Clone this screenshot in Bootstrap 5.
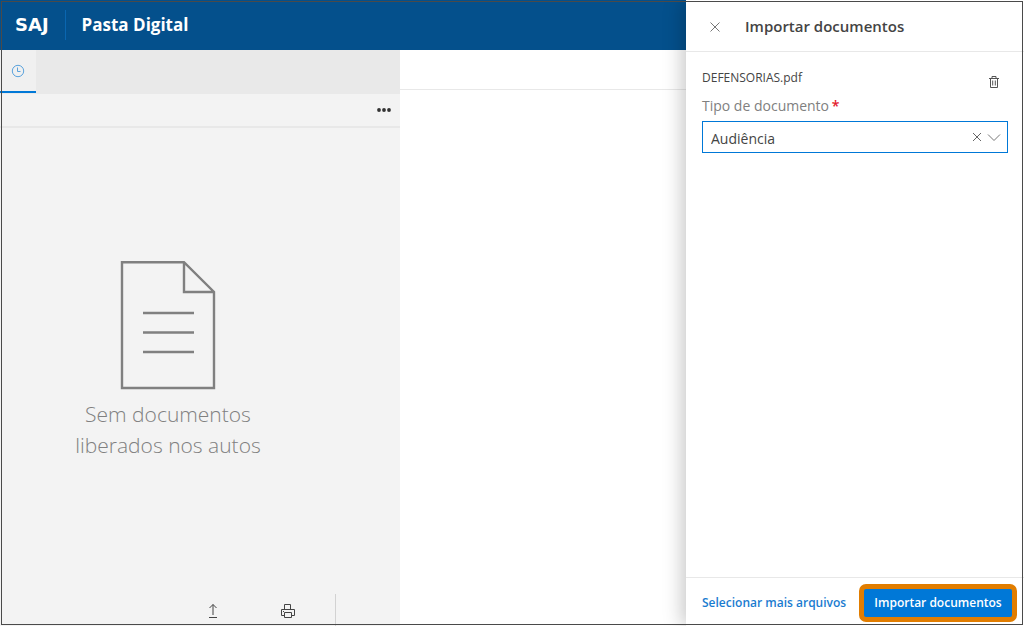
<!DOCTYPE html>
<html lang="pt-BR">
<head>
<meta charset="utf-8">
<meta name="viewport" content="width=device-width, initial-scale=1">
<title>Pasta Digital</title>
<link rel="stylesheet" href="https://cdn.jsdelivr.net/npm/bootstrap@5.3.0/dist/css/bootstrap.min.css">
<style>
  body { font-family: "Open Sans", "Noto Sans", sans-serif; font-size: 14px; color: #444; }
  .app-frame::after { content: ""; position: absolute; inset: 1px; border: 1px solid #4a4a4a; pointer-events: none; z-index: 5; }
  .app-bar { height: 50px; background: #04508c; }
  .brand-logo { font: 700 18px/24px "DejaVu Sans", sans-serif; padding: 0 16px 0 15px; }
  .brand-title { font: 700 17px/24px "Open Sans", sans-serif; padding: 0 16px; }
  .brand-rule { width: 1px; height: 30px; background: #0a66b0; }
  .docs-pane { width: 400px; background: #f3f3f3; }
  .tab-strip { height: 44px; background: #e9e9e9; }
  .tab-recent { width: 36px; height: 43px; background: #f0f0f0; border-bottom: 2px solid #0078d7; }
  .pane-tools { height: 34px; border-bottom: 2px solid #e8e8e8; padding-right: 9px; }
  .empty-state { width: 336px; font-size: 21px; line-height: 31px; font-weight: 300; color: #808080; }
  .pane-actions { width: 336px; height: 32px; border-right: 1px solid #d2d2d2; padding: 2px 39px 0 0; gap: 59px; }
  .viewer-bar { height: 40px; border-bottom: 1px solid #e8e8e8; }
  .import-pane { width: 338px; box-shadow: -4px 0 18px rgba(0,0,0,.22); z-index: 2; }
  .import-head { height: 52px; border-bottom: 1px solid #e8e8e8; padding-left: 22px; gap: 23px; }
  .import-head h2 { font: 600 15px/24px "Open Sans", sans-serif; }
  .file-name { font-size: 12px; line-height: 20px; }
  .field-label { color: #808080; line-height: 20px; padding-bottom: 1px; }
  .req { color: #e3192c; font-weight: 600; margin-left: -1px; }
  .type-select { height: 32px; border: 1px solid #0078d7; border-radius: 0; background: #fff; padding: 2px 56px 0 8px; font-size: 14px; color: #444; appearance: none; }
  .select-icons { inset: 0 7px 0 auto; gap: 3px; pointer-events: none; }
  .select-icons button { pointer-events: auto; }
  .import-foot { height: 49px; border-top: 1px solid #e8e8e8; padding: 6px 7px 4px 16px; }
  .import-foot a, .import-btn { font: 600 12px/18px "Open Sans", sans-serif; }
  .import-foot a { color: #1a7cd0; }
  .import-btn { width: 158px; height: 38px; border: 5px solid #e17d00; border-radius: 7px; background: #0078d7; color: #fff; white-space: nowrap; }
  svg { display: block; fill: none; }
</style>
</head>
<body>
<div class="app-frame position-relative d-flex vh-100 overflow-hidden">
  <div class="d-flex flex-column flex-grow-1">
    <header class="app-bar d-flex align-items-center text-white">
      <span class="brand-logo">SAJ</span>
      <span class="brand-rule"></span>
      <h1 class="brand-title m-0">Pasta Digital</h1>
    </header>
    <div class="d-flex flex-grow-1">
      <main class="docs-pane d-flex flex-column flex-shrink-0">
        <nav class="tab-strip">
          <button class="tab-recent btn rounded-0 border-top-0 border-start-0 border-end-0 p-0 d-flex align-items-center justify-content-center" aria-label="Recentes">
            <svg width="14" height="14" viewBox="0 0 14 14"><g stroke="#5ba3dd"><circle cx="7" cy="7" r="5.7"/><path d="M6.500 3.500v4h3"/></g></svg>
          </button>
        </nav>
        <div class="pane-tools d-flex align-items-center justify-content-end">
          <button class="btn border-0 p-0" aria-label="Mais opções">
            <svg width="14" height="6" viewBox="0 0 14 6"><g fill="#333"><circle cx="2" cy="3" r="1.9"/><circle cx="7" cy="3" r="1.9"/><circle cx="12" cy="3" r="1.9"/></g></svg>
          </button>
        </div>
        <section class="empty-state flex-grow-1 d-flex flex-column align-items-center justify-content-center text-center">
          <svg class="mb-2" width="96" height="130" viewBox="0 1 96 130" stroke="#808080" stroke-width="2.4"><path d="M2 2.200H64L94 32V128H2ZM64 2V32H94M23 53H74M23 72.500H74M23 92H74"/></svg>
          <p class="m-0">Sem documentos<br>liberados nos autos</p>
        </section>
        <div class="pane-actions d-flex align-items-center justify-content-end">
          <button class="btn border-0 p-0" aria-label="Enviar"><svg width="16" height="16" viewBox="0 0 16 16" stroke="#444"><path d="M8 12V1.500M4.500 5 8 1.500 11.500 5M4 14.500h8"/></svg></button>
          <button class="btn border-0 p-0" aria-label="Imprimir"><svg width="16" height="16" viewBox="0 0 16 16" stroke="#444"><path d="M4.500 6.500v-5h6v5M4.500 12.500h-3v-6h13v6h-3M4.500 9.500h7v5h-7zM3 8.500h1"/></svg></button>
        </div>
      </main>
      <section class="flex-grow-1 bg-white"><div class="viewer-bar"></div></section>
    </div>
  </div>
  <aside class="import-pane d-flex flex-column flex-shrink-0 bg-white">
    <header class="import-head d-flex align-items-center">
      <button class="btn border-0 p-0" aria-label="Fechar"><svg width="14" height="14" viewBox="0 0 14 14" stroke="#777"><path d="M2.500 3.500l9 9M11.500 3.500l-9 9"/></svg></button>
      <h2 class="m-0">Importar documentos</h2>
    </header>
    <form class="flex-grow-1 px-3 pt-3">
      <div class="d-flex justify-content-between">
        <span class="file-name">DEFENSORIAS.pdf</span>
        <button type="button" class="btn border-0 p-0 pt-2 pe-2" aria-label="Excluir"><svg width="12" height="12" viewBox="0 0 12 12" stroke="#555"><path d="M1 2.500h10M4 2.500v-2h4v2M2.500 2.500v9h7v-9M4.700 4.500v5M7.300 4.500v5"/></svg></button>
      </div>
      <label class="field-label d-block mt-2 mb-1" for="tipo">Tipo de documento <span class="req">*</span></label>
      <div class="position-relative">
        <select id="tipo" class="type-select w-100"><option>Audiência</option></select>
        <div class="select-icons position-absolute d-flex align-items-center">
          <button type="button" class="btn border-0 p-0" aria-label="Limpar"><svg width="14" height="14" viewBox="0 0 14 14" stroke="#666"><path d="M3 3l8 8M11 3l-8 8"/></svg></button>
          <svg width="14" height="14" viewBox="0 0 14 14" stroke="#777"><path d="M1 4.500l6 6 6-6"/></svg>
        </div>
      </div>
    </form>
    <footer class="import-foot d-flex align-items-center justify-content-between">
      <a href="#" class="text-decoration-none">Selecionar mais arquivos</a>
      <button class="import-btn p-0">Importar documentos</button>
    </footer>
  </aside>
</div>
<script src="https://cdn.jsdelivr.net/npm/bootstrap@5.3.0/dist/js/bootstrap.bundle.min.js"></script>
</body>
</html>
